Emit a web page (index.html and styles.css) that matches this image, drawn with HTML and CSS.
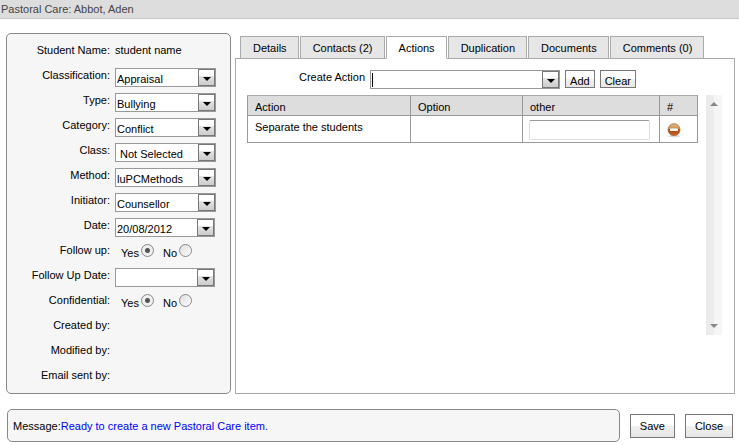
FILE: index.html
```html
<!DOCTYPE html>
<html lang="en">
<head>
<meta charset="utf-8">
<title>Pastoral Care</title>
<link rel="stylesheet" href="styles.css">
</head>
<body>
<header class="title-bar">Pastoral Care: Abbot, Aden</header>
<main class="workspace">
  <section class="summary">
    <div class="field"><span class="label">Student Name:</span><span>student name</span></div>
    <div class="field"><label class="label" for="classification">Classification:</label><span class="combo"><select id="classification"><option>Appraisal</option></select><span class="drop"></span></span></div>
    <div class="field"><label class="label" for="type">Type:</label><span class="combo"><select id="type"><option>Bullying</option></select><span class="drop"></span></span></div>
    <div class="field"><label class="label" for="category">Category:</label><span class="combo"><select id="category"><option>Conflict</option></select><span class="drop"></span></span></div>
    <div class="field"><label class="label" for="class">Class:</label><span class="combo unset"><select id="class"><option>Not Selected</option></select><span class="drop"></span></span></div>
    <div class="field"><label class="label" for="method">Method:</label><span class="combo"><select id="method"><option>luPCMethods</option></select><span class="drop"></span></span></div>
    <div class="field"><label class="label" for="initiator">Initiator:</label><span class="combo"><select id="initiator"><option>Counsellor</option></select><span class="drop"></span></span></div>
    <div class="field"><label class="label" for="date">Date:</label><span class="combo date"><select id="date"><option>20/08/2012</option></select><span class="drop"></span></span></div>
    <div class="field" role="radiogroup" aria-labelledby="follow-label"><span class="label" id="follow-label">Follow up:</span><span class="choices"><label>Yes<input type="radio" name="follow" checked></label><label>No<input type="radio" name="follow"></label></span></div>
    <div class="field"><label class="label" for="follow-date">Follow Up Date:</label><span class="combo date"><select id="follow-date"><option></option></select><span class="drop"></span></span></div>
    <div class="field" role="radiogroup" aria-labelledby="conf-label"><span class="label" id="conf-label">Confidential:</span><span class="choices"><label>Yes<input type="radio" name="confidential" checked></label><label>No<input type="radio" name="confidential"></label></span></div>
    <div class="field"><span class="label">Created by:</span></div>
    <div class="field"><span class="label">Modified by:</span></div>
    <div class="field"><span class="label">Email sent by:</span></div>
  </section>

  <section class="details">
    <div class="tabs" role="tablist">
      <button class="tab" role="tab">Details</button>
      <button class="tab" role="tab">Contacts (2)</button>
      <button class="tab active" role="tab" aria-selected="true">Actions</button>
      <button class="tab" role="tab">Duplication</button>
      <button class="tab" role="tab">Documents</button>
      <button class="tab" role="tab">Comments (0)</button>
    </div>
    <div class="pane" role="tabpanel">
      <div class="create">
        <label for="create">Create Action</label>
        <span class="combo wide"><input id="create" type="text"><span class="caret"></span><span class="drop"></span></span>
        <button class="button small">Add</button>
        <button class="button small">Clear</button>
      </div>
      <div class="list">
        <div class="list-body">
          <table>
            <colgroup><col class="col-action"><col class="col-option"><col class="col-other"><col class="col-remove"></colgroup>
            <thead><tr><th>Action</th><th>Option</th><th>other</th><th>#</th></tr></thead>
            <tbody><tr>
              <td>Separate the students</td>
              <td></td>
              <td class="entry"><input class="other" type="text" aria-label="other"></td>
              <td class="entry"><button class="remove" aria-label="Remove action">
                <svg width="16" height="16" viewBox="0 0 16 16">
                  <defs><linearGradient id="ball" x1="0" y1="0" x2="0" y2="1"><stop offset="0" stop-color="#dcbc8c"/><stop offset=".4" stop-color="#cf8e50"/><stop offset=".5" stop-color="#ab4510"/><stop offset="1" stop-color="#cf6425"/></linearGradient></defs>
                  <ellipse cx="8" cy="14.2" rx="6" ry="1.2" fill="#ddd"/>
                  <circle cx="8" cy="7.7" r="6" fill="url(#ball)" stroke="#a9683a" stroke-width=".8"/>
                  <rect x="4" y="6.5" width="8" height="2.5" rx=".6" fill="#fff"/>
                </svg></button></td>
            </tr></tbody>
          </table>
        </div>
        <div class="scrollbar">
          <svg width="8" height="4" viewBox="0 0 8 4"><path d="M4 0L8 4H0Z" fill="#888"/></svg>
          <svg width="8" height="4" viewBox="0 0 8 4"><path d="M0 0H8L4 4Z" fill="#888"/></svg>
        </div>
      </div>
    </div>
  </section>
</main>
<footer class="footer">
  <div class="message" role="status">Message:<span class="status">Ready to create a new Pastoral Care item.</span></div>
  <button class="button">Save</button>
  <button class="button">Close</button>
</footer>
</body>
</html>
```
FILE: styles.css
```css
* {
  box-sizing: border-box;
}

body {
  margin: 0;
  background: #fff;
  color: #000;
  font: 11px/14px "Liberation Sans", Arial, sans-serif;
}

button,
input,
select {
  margin: 0;
  font: inherit;
  color: inherit;
}

.title-bar {
  height: 19px;
  padding: 2px 1px;
  border-bottom: 1px solid #c8c8c8;
  background: #ddd;
  color: #444;
}

.workspace {
  display: flex;
  gap: 4px;
  padding: 14px 4px 0 6px;
}

/* Summary panel */
.summary {
  flex: 0 0 225px;
  padding: 4px 0 5px;
  border: 1px solid #888;
  border-radius: 5px;
  background: #f6f6f6;
}

.field {
  display: grid;
  grid-template-columns: 103px 1fr;
  column-gap: 5px;
  height: 25px;
  padding-top: 5px;
}

.label {
  text-align: right;
}

.combo {
  position: relative;
  width: 101px;
  height: 19px;
}

.combo.date {
  width: 100px;
}

.combo select,
.combo input {
  width: 100%;
  height: 100%;
  padding: 2px 20px 0 1px;
  border: 1px solid #999;
  border-radius: 0;
  outline: 0;
  background: #fff;
  appearance: none;
}

.combo.unset select {
  padding-left: 4px;
}

.drop {
  position: absolute;
  top: 1px;
  right: 1px;
  bottom: 1px;
  width: 17px;
  border: 1px solid #777;
  background: linear-gradient(#fff 40%, #e4e4e4 40%, #ccc);
  pointer-events: none;
}

.drop::after {
  content: "";
  position: absolute;
  top: 7px;
  left: 4px;
  border: 4px solid transparent;
  border-top-color: #000;
  border-bottom: 0;
}

.choices {
  display: flex;
  gap: 9px;
  padding-left: 6px;
}

.choices label {
  display: flex;
  align-items: flex-end;
  height: 17px;
}

.choices input {
  width: 13px;
  height: 13px;
  margin: 0 0 3px 2px;
  border: 1px solid #888;
  border-radius: 50%;
  background: linear-gradient(135deg, #ddd, #fff);
  appearance: none;
}

.choices input:checked {
  background: radial-gradient(circle, #555 2px, #eee 3px);
}

/* Tabbed details */
.details {
  display: flex;
  flex: 1;
  flex-direction: column;
  padding-top: 3px;
}

.tabs {
  display: flex;
  gap: 1px;
  padding-left: 5px;
}

.tab {
  height: 23px;
  padding: 0 11px 0 12px;
  border: 1px solid #aaa;
  background: #e6e6e6;
  line-height: 20px;
  white-space: nowrap;
}

.tab.active {
  z-index: 1;
  border-bottom-color: #fff;
  background: #fff;
}

.pane {
  flex: 1;
  margin-top: -1px;
  padding: 11px 11px 0;
  border: 1px solid #aaa;
}

.create {
  display: flex;
  gap: 5px;
  padding-left: 52px;
}

.wide {
  width: 190px;
}

.caret {
  position: absolute;
  top: 3px;
  left: 2px;
  width: 1px;
  height: 14px;
  background: #000;
}

.button {
  height: 24px;
  padding: 0 9px;
  border: 1px solid #777;
  border-radius: 0;
  background: linear-gradient(#fff 50%, #f0f0f0 50%, #e6e6e6);
}

.button.small {
  height: 18px;
  padding: 3px 4px 0;
}

.list {
  display: flex;
  gap: 8px;
  height: 240px;
  margin-top: 6px;
}

.list-body {
  flex: 1;
}

table {
  width: 100%;
  border-collapse: collapse;
  table-layout: fixed;
}

.col-action {
  width: 163px;
}

.col-option {
  width: 112px;
}

.col-other {
  width: 137px;
}

th,
td {
  padding: 0 6px 0 7px;
  border: 1px solid #999;
  font-weight: normal;
  text-align: left;
}

th {
  height: 20px;
  padding-top: 3px;
  border-top-color: #aaa;
  background: #ddd;
}

td {
  height: 27px;
  padding-bottom: 4px;
}

.entry {
  padding: 1px 6px 0;
}

.other {
  display: block;
  width: 121px;
  height: 20px;
  border: 1px solid #ddd;
  border-top-color: #999;
  border-radius: 2px;
}

.remove {
  display: block;
  padding: 0;
  border: 0;
  background: none;
}

.remove svg {
  display: block;
}

.scrollbar {
  display: flex;
  flex: 0 0 16px;
  flex-direction: column;
  align-items: center;
  justify-content: space-between;
  margin-right: 1px;
  padding: 7px 0;
  background: linear-gradient(90deg, #eaeaea, #ededed 48%, #f5f5f5 52%, #f6f6f6);
}

/* Footer */
.footer {
  display: flex;
  align-items: center;
  gap: 10px;
  padding: 15px 6px 2px 7px;
}

.message {
  flex: 1;
  height: 33px;
  padding: 9px 5px;
  border: 1px solid #888;
  border-radius: 5px;
  background: #f6f6f6;
}

.status {
  color: #00f;
}
```
